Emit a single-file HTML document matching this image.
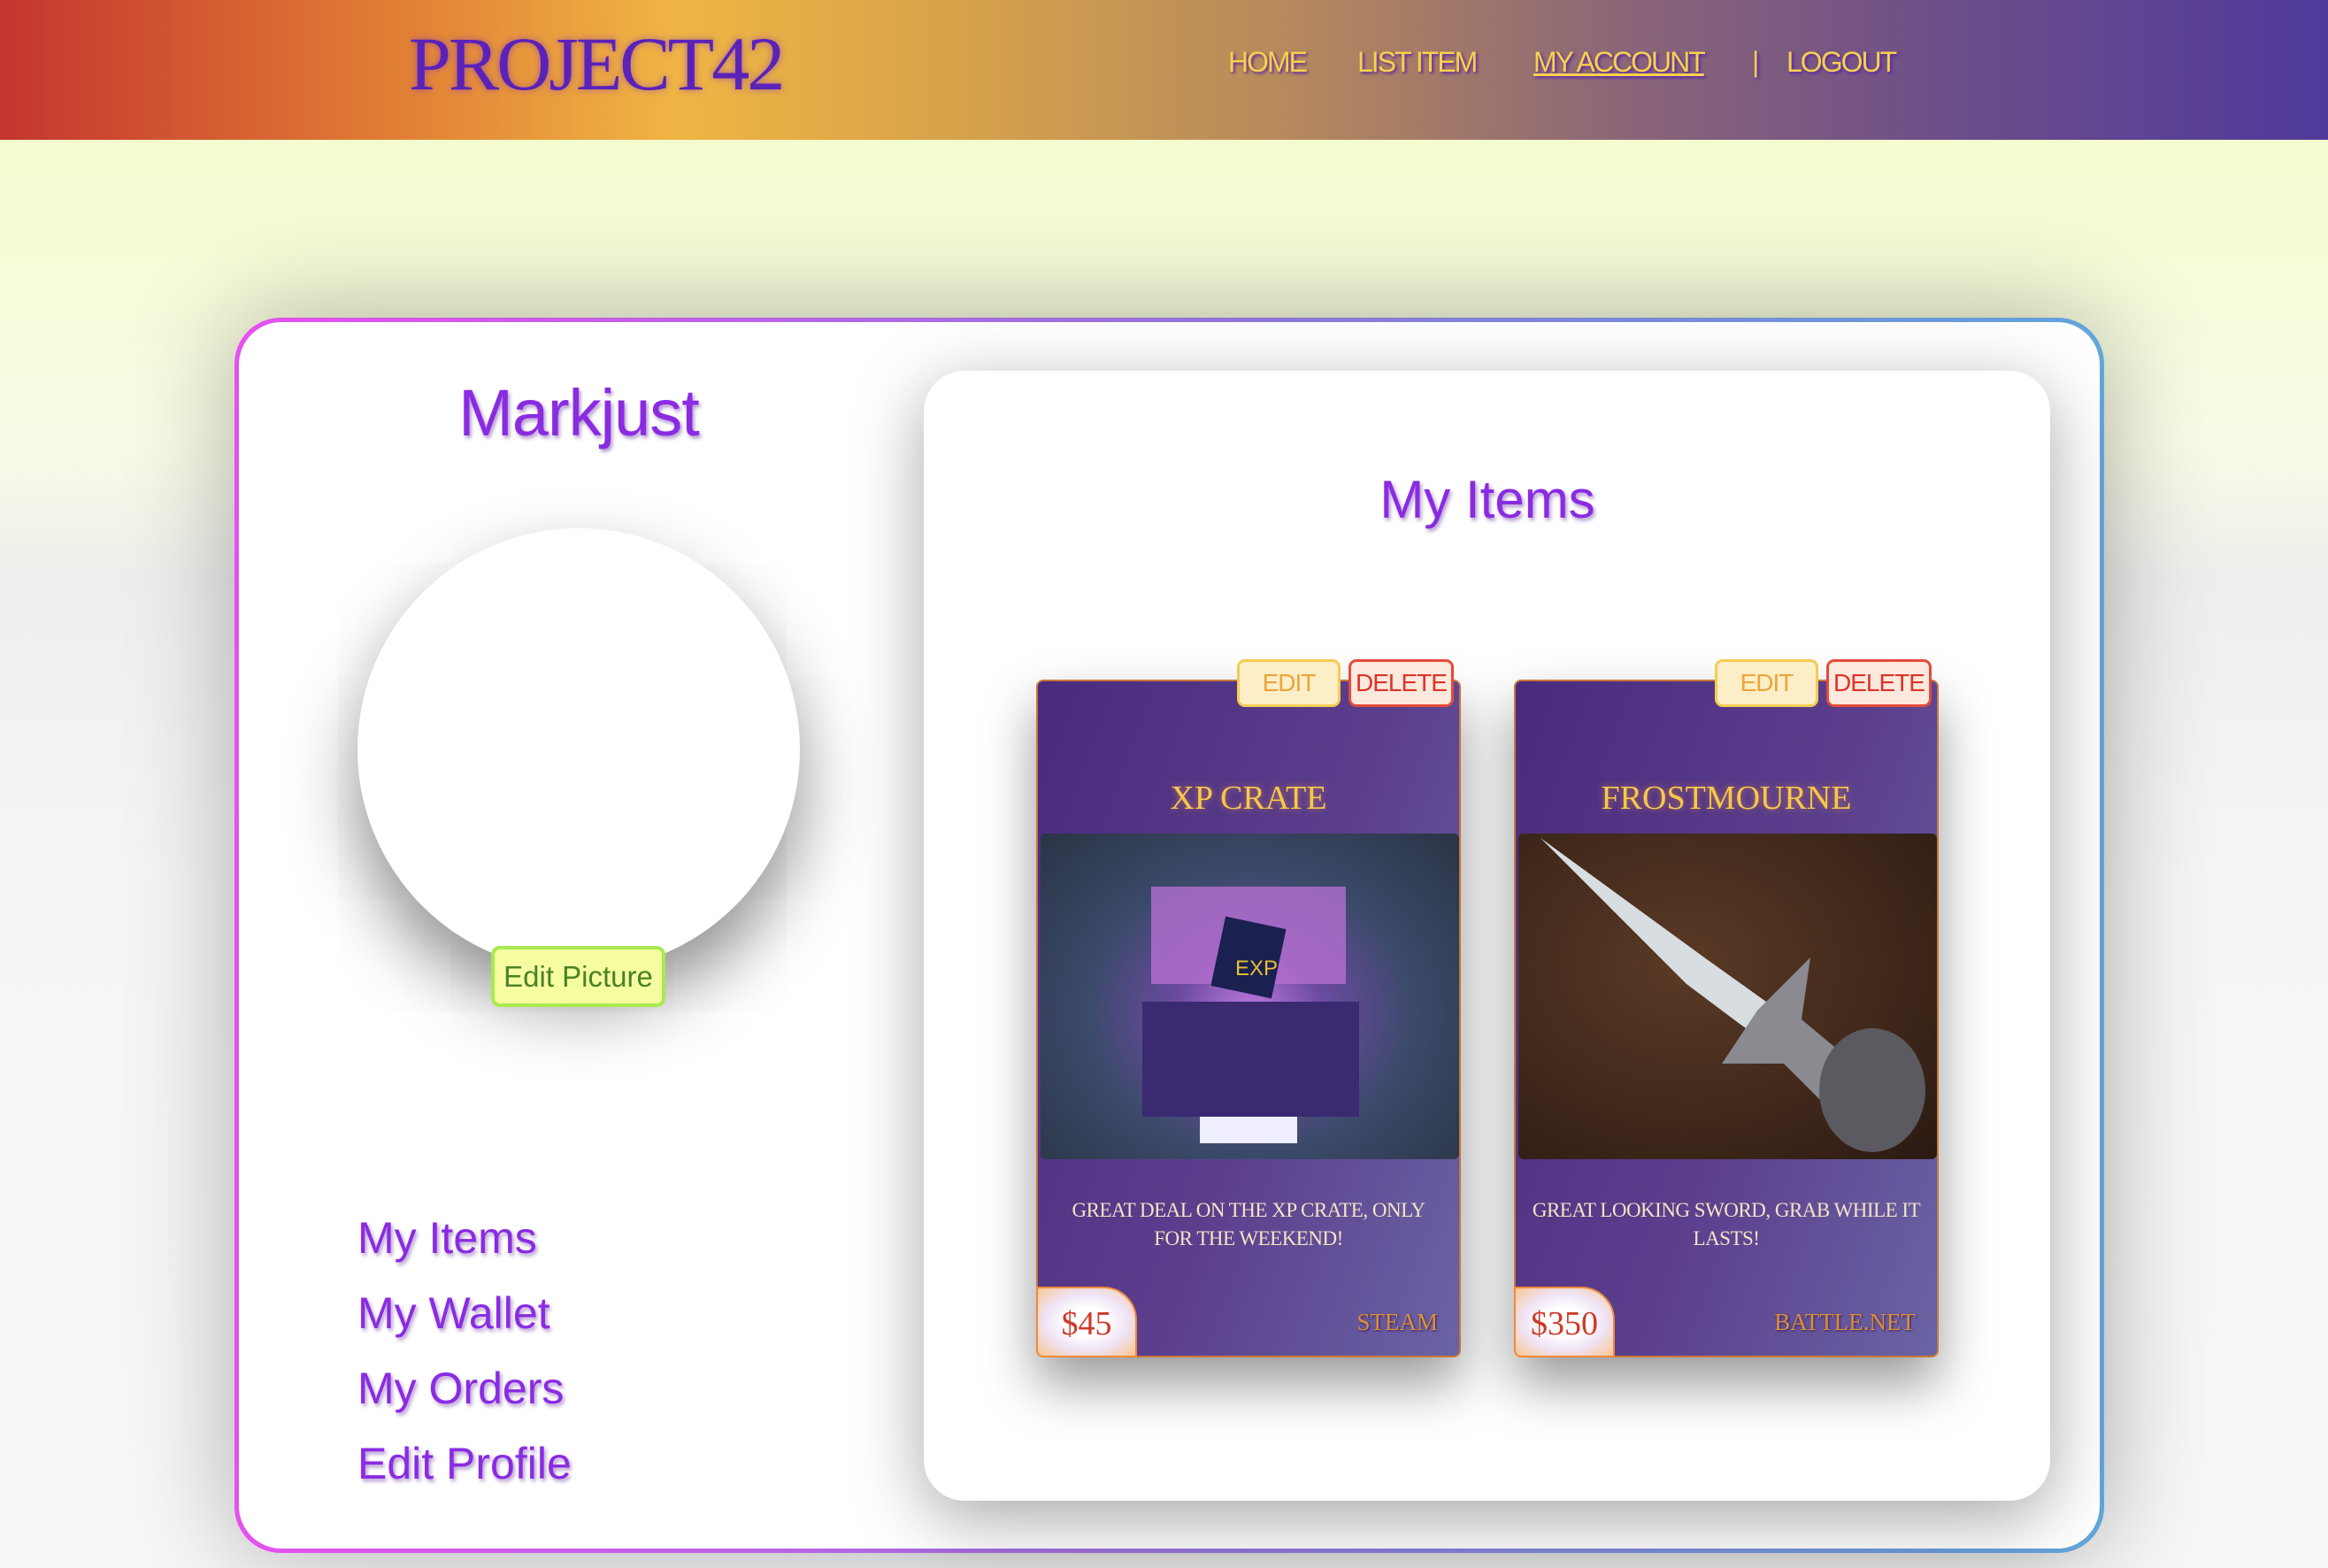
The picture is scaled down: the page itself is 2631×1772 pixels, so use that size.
<!DOCTYPE html>
<html><head><meta charset="utf-8"><style>
*{margin:0;padding:0;box-sizing:border-box}
body{width:2631px;height:1772px;overflow:hidden;position:relative;font-family:"Liberation Sans",sans-serif;background:linear-gradient(#f4fbcf 158px,#f8fbe6 500px,#eeeeec 650px,#f5f5f3 1000px,#f7f7f7)}
.hdr{position:absolute;left:0;top:0;width:2631px;height:158px;background:linear-gradient(90deg,#c4352f 0%,#e07a34 16%,#f0b544 29%,#d9a449 40%,#b78a5c 55%,#8a6578 70%,#6a4c8b 85%,#4f3a9b 100%)}
.logo{position:absolute;left:462px;top:22px;font-family:"Liberation Serif",serif;font-size:86px;color:#5a22b8;letter-spacing:-3px;text-shadow:0 0 8px rgba(120,40,200,.6)}
.nav{position:absolute;top:52px;font-family:"Liberation Sans",sans-serif;font-size:32px;color:#f7d24a;letter-spacing:-2px;text-shadow:2px 2px 3px #5a22a8}
.main{position:absolute;left:265px;top:359px;width:2113px;height:1396px;border-radius:52px;padding:5px;background:linear-gradient(90deg,#e650f0,#8f76d8 55%,#62a6da);box-shadow:0 0 120px rgba(0,0,0,.3)}
.inner{width:100%;height:100%;background:#fff;border-radius:48px;position:relative}
.pur{color:#8a2be2;text-shadow:2px 3px 4px rgba(80,20,140,.45)}
.circle{position:absolute;left:404px;top:597px;width:500px;height:500px;border-radius:50%;background:#fff;box-shadow:0 40px 80px rgba(0,0,0,.45)}
.ep{position:absolute;left:555px;top:1069px;width:197px;height:69px;background:#f6fca0;border:4px solid #a8ea50;border-radius:10px;color:#4b8226;font-size:33px;text-align:center;line-height:61px}
.link{position:absolute;left:404px;font-size:50px}
.panel{position:absolute;left:1044px;top:419px;width:1273px;height:1277px;background:#fff;border-radius:46px;box-shadow:0 20px 80px rgba(0,0,0,.35)}
.card{position:absolute;top:768px;width:480px;height:766px;background:linear-gradient(110deg,#4a2a7e,#5b3f8d 55%,#6a64a4);border:2px solid #c7783a;border-radius:8px;box-shadow:0 30px 60px rgba(0,0,0,.4)}
.btn{position:absolute;top:745px;height:54px;border-radius:9px;font-size:28px;text-align:center;line-height:48px;letter-spacing:-1px}
.edit{width:117px;background:#fcefc8;border:3px solid #f4cc52;color:#eda43a}
.del{width:119px;background:#fde9dd;border:3px solid #e54a3a;color:#dc3428}
.ttl{position:absolute;left:0;right:0;top:110px;text-align:center;font-family:"Liberation Serif",serif;font-size:38px;color:#f7c84a;text-shadow:0 0 8px rgba(250,160,60,.6)}
.img{position:absolute;left:3px;top:172px;width:473px;height:368px;border-radius:6px;overflow:hidden}
.desc{position:absolute;left:8px;right:8px;top:582px;text-align:center;font-family:"Liberation Serif",serif;font-size:23px;letter-spacing:-0.5px;line-height:32px;color:#f5e3c6;text-transform:uppercase;white-space:nowrap}
.price{position:absolute;left:-2px;bottom:-2px;width:114px;height:80px;background:radial-gradient(#fff 30%,#efe3f5 60%,#f9c690);border:2px solid #f08a3a;border-radius:0 38px 0 8px;color:#cc3a2a;font-family:"Liberation Serif",serif;font-size:38px;text-align:center;line-height:80px}
.plat{position:absolute;right:24px;bottom:22px;font-family:"Liberation Serif",serif;font-size:27px;color:#dd9038;text-shadow:1px 1px 2px #3a1a60}
</style></head><body>
<div class="hdr">
<div class="logo">PROJECT42</div>
<div class="nav" style="left:1388px">HOME</div>
<div class="nav" style="left:1534px">LIST ITEM</div>
<div class="nav" style="left:1733px;text-decoration:underline">MY ACCOUNT</div>
<div class="nav" style="left:1980px">|</div>
<div class="nav" style="left:2019px">LOGOUT</div>
</div>
<div class="main"><div class="inner"></div></div>
<div class="pur" style="position:absolute;left:404px;width:500px;top:424px;text-align:center;font-size:74px;letter-spacing:-1px">Markjust</div>
<div class="circle"></div>
<div class="ep">Edit Picture</div>
<div class="link pur" style="top:1370px">My Items</div>
<div class="link pur" style="top:1455px">My Wallet</div>
<div class="link pur" style="top:1540px">My Orders</div>
<div class="link pur" style="top:1625px">Edit Profile</div>
<div class="panel"></div>
<div class="pur" style="position:absolute;left:1381px;width:600px;top:530px;text-align:center;font-size:60px">My Items</div>

<div class="card" style="left:1171px">
<div class="ttl">XP CRATE</div>
<div class="img" style="background:radial-gradient(ellipse at 50% 55%,#c07ae0 0%,#6a4aa0 25%,#3b4a6a 55%,#2a3444 100%)">
<svg width="473" height="368"><rect x="125" y="60" width="220" height="110" fill="#b46fd0" opacity=".8"/><rect x="115" y="190" width="245" height="130" fill="#3a2a70"/><rect x="200" y="100" width="70" height="80" fill="#1a2050" transform="rotate(12 235 140)"/><text x="220" y="160" fill="#e8c030" font-size="24" font-family="Liberation Sans">EXP</text><rect x="180" y="320" width="110" height="30" fill="#eef"/></svg>
</div>
<div class="desc">Great deal on the XP crate, only<br>for the weekend!</div>
<div class="price">$45</div>
<div class="plat">STEAM</div>
</div>
<div class="btn edit" style="left:1398px">EDIT</div>
<div class="btn del" style="left:1524px">DELETE</div>

<div class="card" style="left:1711px">
<div class="ttl">FROSTMOURNE</div>
<div class="img" style="background:radial-gradient(ellipse at 40% 40%,#5a3a26,#3a2418 70%,#2a1a12)">
<svg width="473" height="368"><polygon points="25,5 210,140 280,190 330,230 300,250 250,215 190,170" fill="#d8dde2"/><polygon points="270,200 330,140 320,210 380,260 340,300 300,260 230,260" fill="#8a8a90"/><ellipse cx="400" cy="290" rx="60" ry="70" fill="#5a5a60"/></svg>
</div>
<div class="desc">Great looking sword, grab while it<br>lasts!</div>
<div class="price">$350</div>
<div class="plat">BATTLE.NET</div>
</div>
<div class="btn edit" style="left:1938px">EDIT</div>
<div class="btn del" style="left:2064px">DELETE</div>
</body></html>
